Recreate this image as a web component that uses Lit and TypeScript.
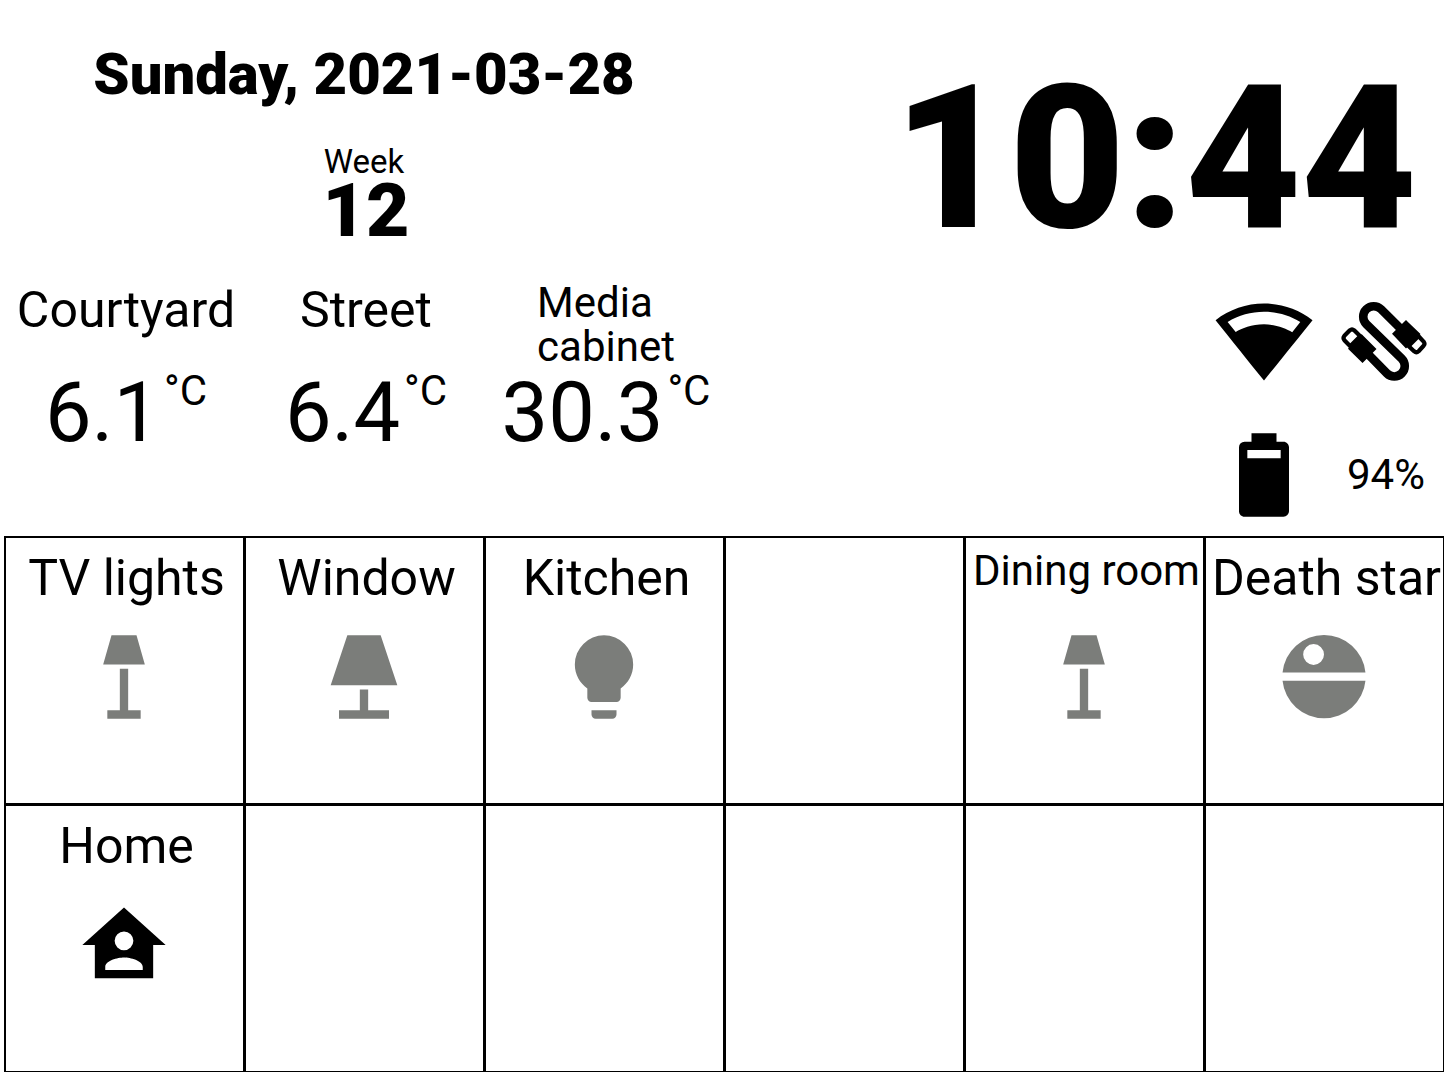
import { LitElement, html, css, svg, nothing } from "lit";
import { customElement, property } from "lit/decorators.js";

const icons = {
  wifi: svg`<path d="M12,3C7.79,3 3.7,4.41 0.38,7C4.41,12.06 7.89,16.37 12,21.5C16.08,16.42 20.24,11.24 23.65,7C20.32,4.41 16.22,3 12,3M12,5C15.07,5 18.09,5.86 20.71,7.45L18.77,9.88C17.26,9 14.88,8 12,8C9,8 6.68,9 5.21,9.84L3.27,7.44C5.91,5.85 8.93,5 12,5Z"/>`,
  battery: svg`<path d="M16,8H8V6H16M16.67,4H15V2H9V4H7.33A1.33,1.33 0 0,0 6,5.33V20.67C6,21.4 6.6,22 7.33,22H16.67A1.33,1.33 0 0,0 18,20.67V5.33C18,4.6 17.4,4 16.67,4Z"/>`,
  floorLamp: svg`<path d="M9,2H15L17,9H7L9,2M11,10H13V20H16V22H8V20H11V10Z"/>`,
  lamp: svg`<path d="M8,2H16L20,14H4L8,2M11,15H13V20H18V22H6V20H11V15Z"/>`,
  bulb: svg`<path d="M12,2A7,7 0 0,0 5,9C5,11.38 6.19,13.47 8,14.74V17A1,1 0 0,0 9,18H15A1,1 0 0,0 16,17V14.74C17.81,13.47 19,11.38 19,9A7,7 0 0,0 12,2M9,21A1,1 0 0,0 10,22H14A1,1 0 0,0 15,21V20H9V21Z"/>`,
  deathStar: svg`<path fill-rule="evenodd" d="M2.05,10.9A10,10 0 0,1 21.95,10.9ZM9.5,4.1A2.5,2.5 0 0,0 9.5,9.1A2.5,2.5 0 0,0 9.5,4.1ZM2.05,12.9H21.95A10,10 0 0,1 2.05,12.9Z"/>`,
  home: svg`<path d="M12,3L2,12H5V20H19V12H22L12,3M12,8.75A2.25,2.25 0 0,1 14.25,11A2.25,2.25 0 0,1 12,13.25A2.25,2.25 0 0,1 9.75,11A2.25,2.25 0 0,1 12,8.75M12,15C13.5,15 16.5,15.75 16.5,17.25V18H7.5V17.25C7.5,15.75 10.5,15 12,15Z"/>`,
  cable: svg`<g transform="scale(.24)">
    <path fill="none" stroke="currentColor" stroke-width="8.6" d="M68,39L47.1,18.3A10.4,10.4 0 0,0 32.3,33.1L67.7,67.6A10.4,10.4 0 0,1 52.9,82.4L32,61"/>
    <path d="M72,29L75,32L86.5,43L85,44.5L86.5,46L75,57.5L73.5,56L72,57.5L58,42.7ZM28,43.5L29.5,45L42.5,58L28.5,72L14,57.7L15.5,56L14,54.5L25,43.5Z"/>
    <path fill="none" stroke="currentColor" stroke-width="4.2" stroke-linejoin="round" d="M83,43.5L89.6,50.6Q91.4,53 89.6,54.8L84.6,60.2Q82.4,62.2 80,60.2L73,53.5M27,46L20.2,39.3Q18,37.4 15.8,39.3L10.4,44.8Q8.6,47 10.4,49.2L17,56"/>
  </g>`,
};
type IconName = keyof typeof icons;

@customElement("dash-icon")
class DashIcon extends LitElement {
  static styles = css`
    :host { display: block; width: 100px; height: 100px; }
    .icon { display: block; width: 100%; height: 100%; fill: currentColor; }
  `;
  @property() name: IconName = "bulb";
  render() {
    return html`<svg class="icon" viewBox="0 0 24 24" aria-hidden="true">${icons[this.name]}</svg>`;
  }
}

interface Tile { label: string; icon: IconName; on?: boolean; small?: boolean }

const tiles: (Tile | null)[] = [
  { label: "TV lights", icon: "floorLamp" },
  { label: "Window", icon: "lamp" },
  { label: "Kitchen", icon: "bulb" },
  null,
  { label: "Dining room", icon: "floorLamp", small: true },
  { label: "Death star", icon: "deathStar" },
  { label: "Home", icon: "home", on: true },
  null, null, null, null, null,
];

const sensors = [
  { name: "Courtyard", value: "6.1" },
  { name: "Street", value: "6.4" },
  { name: "Media cabinet", value: "30.3", small: true },
];

@customElement("app-root")
class AppRoot extends LitElement {
  static styles = css`
    :host { display: block; background: #fff; color: #000; font-family: Roboto, sans-serif; }
    .page { padding: 0 4px; }
    .top { display: grid; grid-template-columns: 1fr 1fr; padding: 40px 0 11px; }
    .left, .right { display: flex; flex-direction: column; }
    .right { align-items: flex-end; }
    .date { margin: 0; text-align: center; font-size: 58px; line-height: 68px; font-weight: 900; white-space: nowrap; }
    .week { display: flex; flex-direction: column; align-items: center; margin-top: 40px; }
    .week-label { font-size: 33px; line-height: 28px; }
    .week-number { padding-left: 4px; font-size: 75px; line-height: 68px; font-weight: 900; }
    .sensors { display: grid; grid-template-columns: repeat(3, 1fr); margin-top: 37px; }
    .sensor { display: flex; flex-direction: column; align-items: center; padding-left: 4px; }
    .name { height: 88px; margin: 0; font-size: 50px; line-height: 58px; font-weight: 400; }
    .name.small { width: min-content; font-size: 42px; line-height: 44px; }
    .reading { display: flex; align-items: flex-start; gap: 4px; }
    .value { font-size: 83px; line-height: 88px; }
    .unit { font-size: 42px; line-height: 44px; }
    .clock { padding-right: 27px; font-size: 200px; line-height: 238px; font-weight: 900; }
    .status { display: grid; grid-template-columns: 120px 120px; row-gap: 34px; margin-top: 13px; place-items: center; }
    .percent { padding-left: 4px; font-size: 42px; line-height: 48px; }
    .tiles { display: grid; grid-template-columns: repeat(6, 1fr); grid-auto-rows: minmax(265px, auto); gap: 3px; padding: 2px 1px 1px 2px; background: #000; }
    .tile { display: flex; flex-direction: column; align-items: center; gap: 19px; min-width: 0; margin: 0; padding: 10px 2px 10px 0; border: 0; background: #fff; color: #000; font: inherit; }
    .label { height: 60px; padding-left: 6px; font-size: 50px; line-height: 60px; white-space: nowrap; }
    .label.small { font-size: 42px; line-height: 46px; }
    .off { color: #7b7d7a; }
  `;
  render() {
    return html`<main class="page">
      <section class="top">
        <div class="left">
          <h1 class="date">Sunday, 2021-03-28</h1>
          <div class="week"><span class="week-label">Week</span><span class="week-number">12</span></div>
          <div class="sensors">
            ${sensors.map((s) => html`<div class="sensor">
              <h2 class="name ${s.small ? "small" : ""}">${s.name}</h2>
              <div class="reading"><span class="value">${s.value}</span><span class="unit">°C</span></div>
            </div>`)}
          </div>
        </div>
        <div class="right">
          <time class="clock">10:44</time>
          <div class="status">
            <dash-icon name="wifi"></dash-icon>
            <dash-icon name="cable"></dash-icon>
            <dash-icon name="battery"></dash-icon>
            <span class="percent">94%</span>
          </div>
        </div>
      </section>
      <section class="tiles">
        ${tiles.map((t) => t
          ? html`<button class="tile" type="button">
              <span class="label ${t.small ? "small" : ""}">${t.label}</span>
              <dash-icon class=${t.on ? "on" : "off"} name=${t.icon}></dash-icon>
            </button>`
          : html`<div class="tile">${nothing}</div>`)}
      </section>
    </main>`;
  }
}
